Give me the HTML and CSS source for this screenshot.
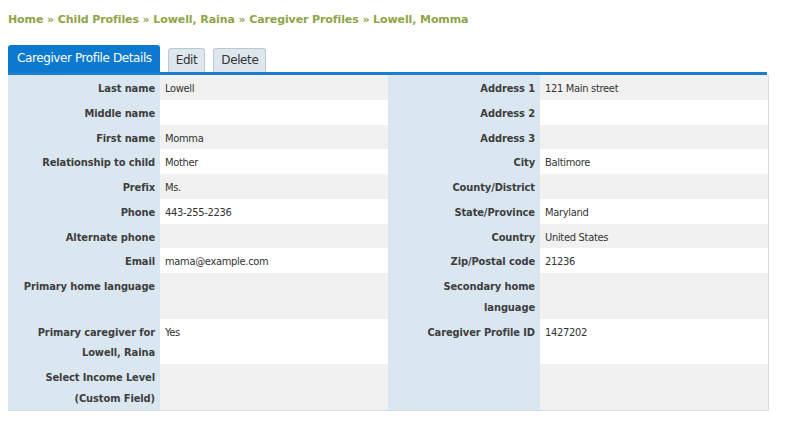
FILE: index.html
```html
<!DOCTYPE html>
<html>
<head>
<meta charset="utf-8">
<link rel="stylesheet" href="styles.css">
</head>
<body>
<div class="crumbs">Home » Child Profiles » Lowell, Raina » Caregiver Profiles » Lowell, Momma</div>
<div class="tabs">
  <span class="tab active">Caregiver Profile Details</span>
  <span class="tab">Edit</span>
  <span class="tab">Delete</span>
</div>
<table class="details">
  <tr class="odd"><th>Last name</th><td>Lowell</td><th>Address 1</th><td>121 Main street</td></tr>
  <tr><th>Middle name</th><td></td><th>Address 2</th><td></td></tr>
  <tr class="odd"><th>First name</th><td>Momma</td><th>Address 3</th><td></td></tr>
  <tr><th>Relationship to child</th><td>Mother</td><th>City</th><td>Baltimore</td></tr>
  <tr class="odd"><th>Prefix</th><td>Ms.</td><th>County/District</th><td></td></tr>
  <tr><th>Phone</th><td>443-255-2236</td><th>State/Province</th><td>Maryland</td></tr>
  <tr class="odd"><th>Alternate phone</th><td></td><th>Country</th><td>United States</td></tr>
  <tr><th>Email</th><td>mama@example.com</td><th>Zip/Postal code</th><td>21236</td></tr>
  <tr class="odd"><th>Primary home language</th><td></td><th>Secondary home language</th><td></td></tr>
  <tr><th>Primary caregiver for Lowell, Raina</th><td>Yes</td><th>Caregiver Profile ID</th><td>1427202</td></tr>
  <tr class="odd"><th>Select Income Level (Custom Field)</th><td></td><th></th><td></td></tr>
</table>
</body>
</html>
```
FILE: styles.css
```css
html, body { margin: 0; padding: 0; background: #fff; }
body {
  padding: 12px 18px 0 8px;
  font-family: "DejaVu Sans", Tahoma, sans-serif;
  color: #333;
}
.crumbs {
  font-size: 11px;
  font-weight: bold;
  color: #8fa446;
  line-height: 16px;
  letter-spacing: -0.1px;
}
.tabs {
  margin-top: 18px;
  display: flex;
  align-items: flex-end;
  gap: 8px;
  border-bottom: 3px solid #1b7fd1;
  height: 26px;
}
.tab {
  font-size: 12px;
  letter-spacing: -0.4px;
  line-height: 22px;
  height: 23px;
  padding: 0 7px;
  background: #dfe7ee;
  border: 1px solid #b9c8d4;
  border-bottom: none;
  border-radius: 3px 3px 0 0;
  color: #333;
}
.tab.active {
  background: #0a79cf;
  border-color: #0a79cf;
  color: #fff;
  height: 26px;
  line-height: 24px;
  padding: 0 7px 0 8px;
}
.details {
  width: 759px;
  border-collapse: collapse;
  border-right: 1px solid #d9dee2;
  border-bottom: 1px solid #d9dee2;
  font-size: 11px;
  table-layout: fixed;
  font-family: "DejaVu Sans Condensed", "DejaVu Sans", sans-serif;
}
.details th, .details td {
  line-height: 20.75px;
  padding: 4px 5px 0 5px;
  vertical-align: top;
}
.details th {
  width: 142px;
  text-align: right;
  background: #dae7f1;
  font-weight: bold;
  color: #3d3d3d;
  letter-spacing: -0.1px;
}
.details td {
  width: 218px;
  text-align: left;
  background: #fff;
  color: #333;
  letter-spacing: -0.3px;
}
.details tr.odd td { background: #f1f1f1; }
```
